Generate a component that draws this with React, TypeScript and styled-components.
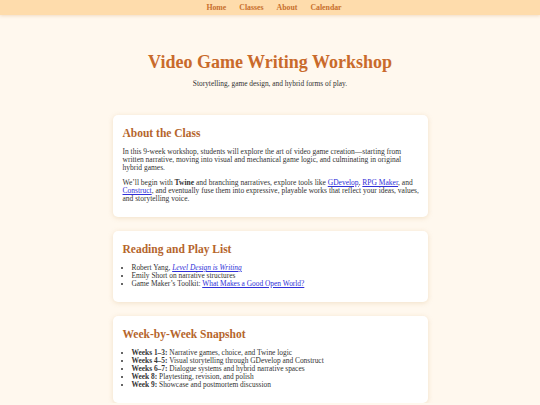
import styled, {createGlobalStyle} from "styled-components";

const GlobalStyle = createGlobalStyle`
  html, body {
    margin: 0;
    padding: 0;
    background-color: #fff8ee;
  }
  body {
    font-family: "Liberation Serif", Georgia, serif;
    color: #333;
  }
`;

const Nav = styled.nav`
  height: 15px;
  padding-left: 8px;
  background-color: #fedcac;
  box-shadow: 0 1px 3px rgba(200, 140, 80, 0.25);
  display: flex;
  justify-content: center;
  align-items: center;
  gap: 13px;
`;

const NavLink = styled.a`
  color: #c8702e;
  font-size: 7.8px;
  font-weight: bold;
  text-decoration: none;
`;

const Header = styled.header`
  padding-top: 37px;
  text-align: center;
`;

const Title = styled.h1`
  margin: 0;
  color: #c96a2b;
  font-size: 18px;
  line-height: 20px;
  font-weight: bold;
`;

const Subtitle = styled.p`
  margin: 8px 0 0;
  font-size: 7.4px;
  line-height: 8px;
`;

const Main = styled.main`
  width: 315px;
  margin: 27px auto 0;
  display: flex;
  flex-direction: column;
  gap: 14px;
`;

const Card = styled.section`
  background-color: #fff;
  border-radius: 5px;
  box-shadow: 0 1px 5px rgba(210, 170, 110, 0.3);
  padding: 11px 8px 14px 10px;
`;

const CardTitle = styled.h2`
  margin: 0 0 8px;
  color: #b5652c;
  font-size: 11.5px;
  line-height: 14px;
  font-weight: bold;
`;

const Para = styled.p`
  margin: 0 0 7px;
  font-size: 7.5px;
  line-height: 8px;
  &:last-child {
    margin-bottom: 0;
  }
`;

const List = styled.ul`
  margin: 0;
  padding-left: 9px;
  font-size: 7.4px;
  line-height: 8px;
`;

const Link = styled.a`
  color: #3030d8;
`;

const weeks = [
  {label: "Weeks 1–3:", text: "Narrative games, choice, and Twine logic"},
  {label: "Weeks 4–5:", text: "Visual storytelling through GDevelop and Construct"},
  {label: "Weeks 6–7:", text: "Dialogue systems and hybrid narrative spaces"},
  {label: "Week 8:", text: "Playtesting, revision, and polish"},
  {label: "Week 9:", text: "Showcase and postmortem discussion"},
];

export default function App() {
  return (
    <>
      <GlobalStyle />
      <Nav>
        <NavLink href="#">Home</NavLink>
        <NavLink href="#">Classes</NavLink>
        <NavLink href="#">About</NavLink>
        <NavLink href="#">Calendar</NavLink>
      </Nav>
      <Header>
        <Title>Video Game Writing Workshop</Title>
        <Subtitle>Storytelling, game design, and hybrid forms of play.</Subtitle>
      </Header>
      <Main>
        <Card>
          <CardTitle>About the Class</CardTitle>
          <Para>
            In this 9-week workshop, students will explore the art of video game
            creation—starting from written narrative, moving into visual and
            mechanical game logic, and culminating in original hybrid games.
          </Para>
          <Para>
            We’ll begin with <strong>Twine</strong> and branching narratives,
            explore tools like <Link href="#">GDevelop</Link>,{" "}
            <Link href="#">RPG Maker</Link>, and <Link href="#">Construct</Link>,
            and eventually fuse them into expressive, playable works that reflect
            your ideas, values, and storytelling voice.
          </Para>
        </Card>
        <Card>
          <CardTitle>Reading and Play List</CardTitle>
          <List>
            <li>
              Robert Yang, <Link href="#"><em>Level Design is Writing</em></Link>
            </li>
            <li>Emily Short on narrative structures</li>
            <li>
              Game Maker’s Toolkit:{" "}
              <Link href="#">What Makes a Good Open World?</Link>
            </li>
          </List>
        </Card>
        <Card>
          <CardTitle>Week-by-Week Snapshot</CardTitle>
          <List>
            {weeks.map((w) => (
              <li key={w.label}>
                <strong>{w.label}</strong> {w.text}
              </li>
            ))}
          </List>
        </Card>
      </Main>
    </>
  );
}
